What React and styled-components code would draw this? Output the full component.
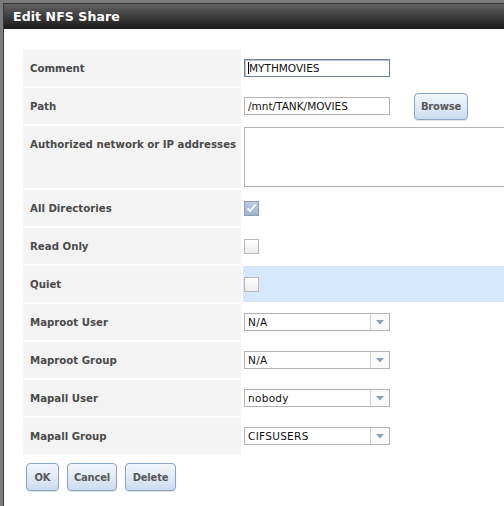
import React from "react";
import styled, { createGlobalStyle } from "styled-components";

const Global = createGlobalStyle`
  html, body { margin: 0; padding: 0; }
  body {
    background: #7b7b7b;
    width: 504px;
    height: 506px;
    overflow: hidden;
    font-family: "DejaVu Sans", Verdana, sans-serif;
  }
`;

const Page = styled.div`
  padding: 3px 0 0 3px;
  height: 506px;
  box-sizing: border-box;
`;

const Dialog = styled.div`
  width: 540px;
  height: 520px;
  background: #fff;
  border-left: 1px solid #3a3a3a;
  border-top: 1px solid #3a3a3a;
  box-sizing: border-box;
`;

const TitleBar = styled.div`
  height: 25px;
  display: flex;
  align-items: center;
  padding-left: 9px;
  background: linear-gradient(#626262, #3a3a3a 55%, #181818);
  color: #fff;
  font-weight: bold;
  font-size: 12.5px;
  letter-spacing: 0.1px;
`;

const Body = styled.div`
  padding: 21px 0 0 19px;
`;

const Table = styled.div`
  display: grid;
  grid-template-columns: 218px 1fr;
  column-gap: 2px;
  row-gap: 2px;
`;

const Label = styled.div`
  background: #f3f3f3;
  box-sizing: border-box;
  min-height: ${(p) => p.$h || 36}px;
  padding: 1px 0 0 7px;
  line-height: 35px;
  font-weight: bold;
  font-size: 10.2px;
  color: #4a4a4a;
  white-space: nowrap;
`;

const Value = styled.div`
  display: flex;
  align-items: center;
  padding-left: 1px;
  gap: 24px;
  background: ${(p) => (p.$hl ? "#d5e8fb" : "transparent")};
`;

const TextInput = styled.div`
  width: 146px;
  height: 18px;
  box-sizing: border-box;
  border: 1px solid ${(p) => (p.$focus ? "#6f8296" : "#b3b3b3")};
  box-shadow: ${(p) => (p.$focus ? "inset 1px 1px 0 #b8c4d0" : "none")};
  font-size: 10.5px;
  line-height: 16px;
  padding-left: 3px;
  color: #111;
  display: flex;
  align-items: center;
`;

const Caret = styled.span`
  display: inline-block;
  width: 1px;
  height: 12px;
  background: #000;
`;

const TextArea = styled.div`
  width: 300px;
  height: 60px;
  box-sizing: border-box;
  border: 1px solid #b3b3b3;
  align-self: flex-start;
  margin-top: 1px;
`;

const Button = styled.div`
  width: ${(p) => p.$w}px;
  height: ${(p) => p.$h || 28}px;
  box-sizing: border-box;
  border: 1px solid #8aa4c3;
  border-radius: 4px;
  background: linear-gradient(#f2f6fb, #dce8f5 60%, #cbdcef);
  box-shadow: 0 1px 1px rgba(0, 0, 0, 0.12);
  display: flex;
  align-items: center;
  justify-content: center;
  font-weight: bold;
  font-size: 10px;
  letter-spacing: -0.2px;
  color: #585858;
`;

const Check = styled.div`
  width: 15px;
  height: 15px;
  box-sizing: border-box;
  border: 1px solid ${(p) => (p.$on ? "#8e9db1" : "#b9b9b9")};
  background: ${(p) =>
    p.$on ? "linear-gradient(#bccde0, #9fb5cf)" : "linear-gradient(#ffffff, #ececec)"};
  display: flex;
  align-items: center;
  justify-content: center;
`;

const Select = styled.div`
  width: 146px;
  height: 18px;
  box-sizing: border-box;
  border: 1px solid #b3b3b3;
  display: flex;
  font-size: 10.5px;
  color: #111;
`;

const SelectText = styled.div`
  flex: 1;
  padding-left: 3px;
  display: flex;
  align-items: center;
  letter-spacing: 0.3px;
`;

const Arrow = styled.div`
  width: 18px;
  border-left: 1px solid #cfcfcf;
  background: #fafafa;
  display: flex;
  align-items: center;
  justify-content: center;
`;

const Buttons = styled.div`
  display: flex;
  gap: 8px;
  padding: 9px 0 0 3px;
`;

const Tick = () => (
  <svg width="11" height="10" viewBox="0 0 11 10">
    <path d="M1.5 5.5 L4.2 8 L9.5 1.5" fill="none" stroke="#fff" strokeWidth="1.8" />
  </svg>
);

const Tri = () => (
  <svg width="8" height="5" viewBox="0 0 8 5">
    <path d="M0 0 H8 L4 4.5 Z" fill="#8c9fb6" />
  </svg>
);

const Sel = ({ v }) => (
  <Select>
    <SelectText>{v}</SelectText>
    <Arrow>
      <Tri />
    </Arrow>
  </Select>
);

export default function App() {
  return (
    <>
      <Global />
      <Page>
        <Dialog>
          <TitleBar>Edit NFS Share</TitleBar>
          <Body>
            <Table>
              <Label>Comment</Label>
              <Value>
                <TextInput $focus>
                  <Caret />
                  MYTHMOVIES
                </TextInput>
              </Value>
              <Label>Path</Label>
              <Value>
                <TextInput>/mnt/TANK/MOVIES</TextInput>
                <Button $w={54} $h={27}>Browse</Button>
              </Value>
              <Label $h={62}>Authorized network or IP addresses</Label>
              <Value>
                <TextArea />
              </Value>
              <Label>All Directories</Label>
              <Value>
                <Check $on>
                  <Tick />
                </Check>
              </Value>
              <Label>Read Only</Label>
              <Value>
                <Check />
              </Value>
              <Label>Quiet</Label>
              <Value $hl>
                <Check />
              </Value>
              <Label>Maproot User</Label>
              <Value>
                <Sel v="N/A" />
              </Value>
              <Label>Maproot Group</Label>
              <Value>
                <Sel v="N/A" />
              </Value>
              <Label>Mapall User</Label>
              <Value>
                <Sel v="nobody" />
              </Value>
              <Label>Mapall Group</Label>
              <Value>
                <Sel v="CIFSUSERS" />
              </Value>
            </Table>
            <Buttons>
              <Button $w={33}>OK</Button>
              <Button $w={50}>Cancel</Button>
              <Button $w={51}>Delete</Button>
            </Buttons>
          </Body>
        </Dialog>
      </Page>
    </>
  );
}
